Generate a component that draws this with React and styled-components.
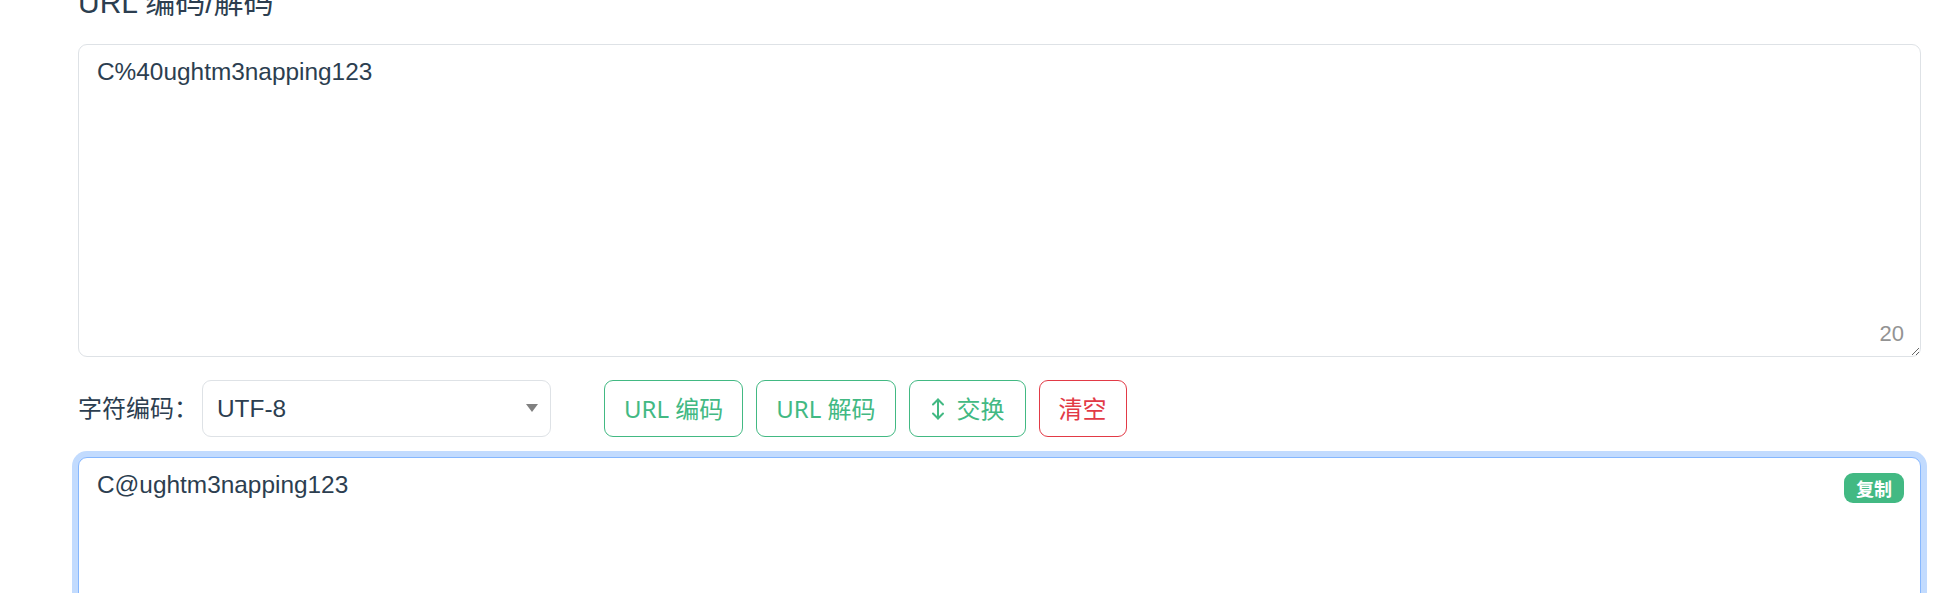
import React, { useState, useEffect, useRef } from 'react'
import styled, { createGlobalStyle } from 'styled-components'

const GREEN = '#42b983'
const RED = '#e23a46'
const INK = '#2c3e50'

const GlobalStyle = createGlobalStyle`
	html, body {
		margin: 0;
		padding: 0;
		background: #fff;
		overflow: hidden;
	}
	body {
		font-family: "Liberation Sans", "Noto Sans CJK SC", sans-serif;
		color: ${INK};
	}
	* {
		box-sizing: border-box;
	}
`

const Page = styled.div`
	display: flow-root;
	padding: 0 20px 0 78px;
`

const Title = styled.h2`
	margin: -15px 0 23px;
	font-size: 30px;
	line-height: 36px;
	font-weight: 400;
	color: ${INK};
`

const Field = styled.div`
	position: relative;
	margin-bottom: ${p => p.$gap || 0}px;
`

const TextArea = styled.textarea`
	display: block;
	width: 100%;
	height: 313px;
	margin: 0;
	padding: 9px 18px;
	font-family: "Liberation Sans", "Noto Sans CJK SC", sans-serif;
	font-size: 24.4px;
	line-height: 36px;
	color: ${INK};
	caret-color: ${INK};
	background: #fff;
	border: 1px solid ${p => (p.$focused ? '#86b7fe' : '#dee2e6')};
	border-radius: 9px;
	box-shadow: ${p => (p.$focused ? '0 0 0 6px #c2dbfe' : 'none')};
	outline: none;
	resize: vertical;
`

const Counter = styled.span`
	position: absolute;
	right: 17px;
	bottom: 11px;
	font-size: 22px;
	line-height: 24px;
	color: #939393;
	pointer-events: none;
`

const CopyBadge = styled.button`
	position: absolute;
	top: 16px;
	right: 17px;
	height: 30px;
	padding: 0 12px;
	border: none;
	border-radius: 9px;
	background: ${GREEN};
	color: #fff;
	font-family: "Noto Sans CJK SC", sans-serif;
	font-size: 18px;
	font-weight: 700;
	line-height: 30px;
	cursor: pointer;
`

const Toolbar = styled.div`
	display: flex;
	align-items: center;
	height: 57px;
	margin-bottom: 20px;
`

const Label = styled.label`
	font-size: 24px;
	line-height: 36px;
	margin-right: 4px;
	color: ${INK};
`

const SelectWrap = styled.div`
	position: relative;
	width: 349px;
	height: 57px;

	&::after {
		content: '';
		position: absolute;
		right: 13px;
		top: 24px;
		border-left: 6.5px solid transparent;
		border-right: 6.5px solid transparent;
		border-top: 8px solid #808080;
		pointer-events: none;
	}
`

const Select = styled.select`
	appearance: none;
	width: 100%;
	height: 100%;
	padding: 0 40px 0 14px;
	font-family: "Liberation Sans", sans-serif;
	font-size: 24.4px;
	color: ${INK};
	background: #fff;
	border: 1px solid #dee2e6;
	border-radius: 9px;
	outline: none;
`

const Buttons = styled.div`
	display: flex;
	gap: 13px;
	margin-left: 53px;
`

const Button = styled.button`
	display: inline-flex;
	align-items: center;
	gap: 11px;
	height: 57px;
	padding: 0 ${p => p.$pad || 19}px;
	background: #fff;
	color: ${p => p.$color};
	border: 1px solid ${p => p.$color};
	border-radius: 9px;
	font-family: "Noto Sans", "Noto Sans CJK SC", sans-serif;
	font-size: 24px;
	line-height: 36px;
	cursor: pointer;
`

const SwapIcon = () => (
	<svg width='16' height='22' viewBox='0 0 16 22' fill='none' stroke='currentColor' strokeWidth='2' strokeLinecap='round' strokeLinejoin='round'>
		<path d='M8 1.5v19' />
		<path d='M3 6.5l5-5 5 5' />
		<path d='M3 15.5l5 5 5-5' />
	</svg>
)

const App = () => {
	const [input, setInput] = useState('C%40ughtm3napping123')
	const [output, setOutput] = useState('C@ughtm3napping123')
	const [charset, setCharset] = useState('UTF-8')
	const outRef = useRef(null)

	useEffect(() => {
		const el = outRef.current
		if (el) {
			el.focus()
			el.setSelectionRange(el.value.length, el.value.length)
		}
	}, [])

	const encode = () => setOutput(encodeURIComponent(input))
	const decode = () => {
		try {
			setOutput(decodeURIComponent(input))
		} catch (e) {
			setOutput(input)
		}
	}
	const swap = () => {
		setInput(output)
		setOutput(input)
	}
	const clear = () => {
		setInput('')
		setOutput('')
	}

	return (
		<Page>
			<GlobalStyle />
			<Title>URL 编码/解码</Title>
			<Field $gap={23}>
				<TextArea value={input} onChange={e => setInput(e.target.value)} />
				<Counter>{input.length}</Counter>
			</Field>
			<Toolbar>
				<Label htmlFor='charset'>字符编码：</Label>
				<SelectWrap>
					<Select id='charset' value={charset} onChange={e => setCharset(e.target.value)}>
						<option>UTF-8</option>
						<option>GBK</option>
						<option>GB2312</option>
					</Select>
				</SelectWrap>
				<Buttons>
					<Button $color={GREEN} onClick={encode}>URL 编码</Button>
					<Button $color={GREEN} onClick={decode}>URL 解码</Button>
					<Button $color={GREEN} $pad={20} onClick={swap}>
						<SwapIcon />
						交换
					</Button>
					<Button $color={RED} onClick={clear}>清空</Button>
				</Buttons>
			</Toolbar>
			<Field>
				<TextArea
					ref={outRef}
					$focused
					value={output}
					onChange={e => setOutput(e.target.value)}
				/>
				<CopyBadge>复制</CopyBadge>
			</Field>
		</Page>
	)
}

export default App
